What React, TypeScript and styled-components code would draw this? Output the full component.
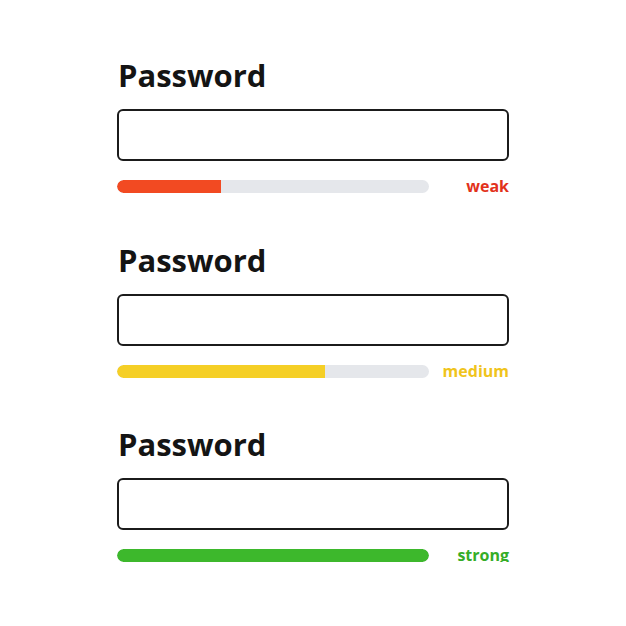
import styled, { createGlobalStyle } from "styled-components";

const GlobalStyle = createGlobalStyle`
  body {
    margin: 0;
    background: #ffffff;
    font-family: "Open Sans", "Liberation Sans", sans-serif;
  }
`;

const Wrapper = styled.div`
  width: 392px;
  margin: 0 auto;
  padding-top: 57px;
  display: flex;
  flex-direction: column;
  gap: 48.5px;
`;

const Field = styled.div`
  display: flex;
  flex-direction: column;
`;

const Title = styled.h2`
  margin: 0 0 16px 1px;
  font-size: 31px;
  line-height: 36px;
  font-weight: 700;
  color: #141414;
`;

const Input = styled.input`
  box-sizing: border-box;
  width: 100%;
  height: 52px;
  border: 2px solid #1b1b1b;
  border-radius: 6px;
  background: #ffffff;
  outline: none;
  padding: 0 12px;
  font-size: 16px;
`;

const Meter = styled.div`
  margin-top: 19px;
  display: flex;
  align-items: center;
  justify-content: space-between;
  height: 13px;
`;

const Track = styled.div`
  width: 312px;
  height: 13px;
  border-radius: 7px;
  background: #e5e7eb;
  overflow: hidden;
`;

const Fill = styled.div<{ $color: string }>`
  height: 100%;
  background: ${(props) => props.$color};
  border-radius: 7px 0 0 7px;
`;

const Label = styled.span<{ $color: string }>`
  font-size: 16px;
  font-weight: 700;
  line-height: 13px;
  color: ${(props) => props.$color};
`;

const levels = [
  { label: "weak", percent: 33.3, bar: "#f24a22", text: "#e2321b" },
  { label: "medium", percent: 66.7, bar: "#f5cf26", text: "#f0c41c" },
  { label: "strong", percent: 100, bar: "#3db82c", text: "#35ad27" },
];

function App() {
  return (
    <>
      <GlobalStyle />
      <Wrapper>
        {levels.map((level) => (
          <Field key={level.label}>
            <Title>Password</Title>
            <Input type="password" aria-label="Password" />
            <Meter>
              <Track>
                <Fill
                  $color={level.bar}
                  style={{
                    width: `${level.percent}%`,
                    borderRadius: level.percent === 100 ? 7 : undefined,
                  }}
                />
              </Track>
              <Label $color={level.text}>{level.label}</Label>
            </Meter>
          </Field>
        ))}
      </Wrapper>
    </>
  );
}

export default App;
